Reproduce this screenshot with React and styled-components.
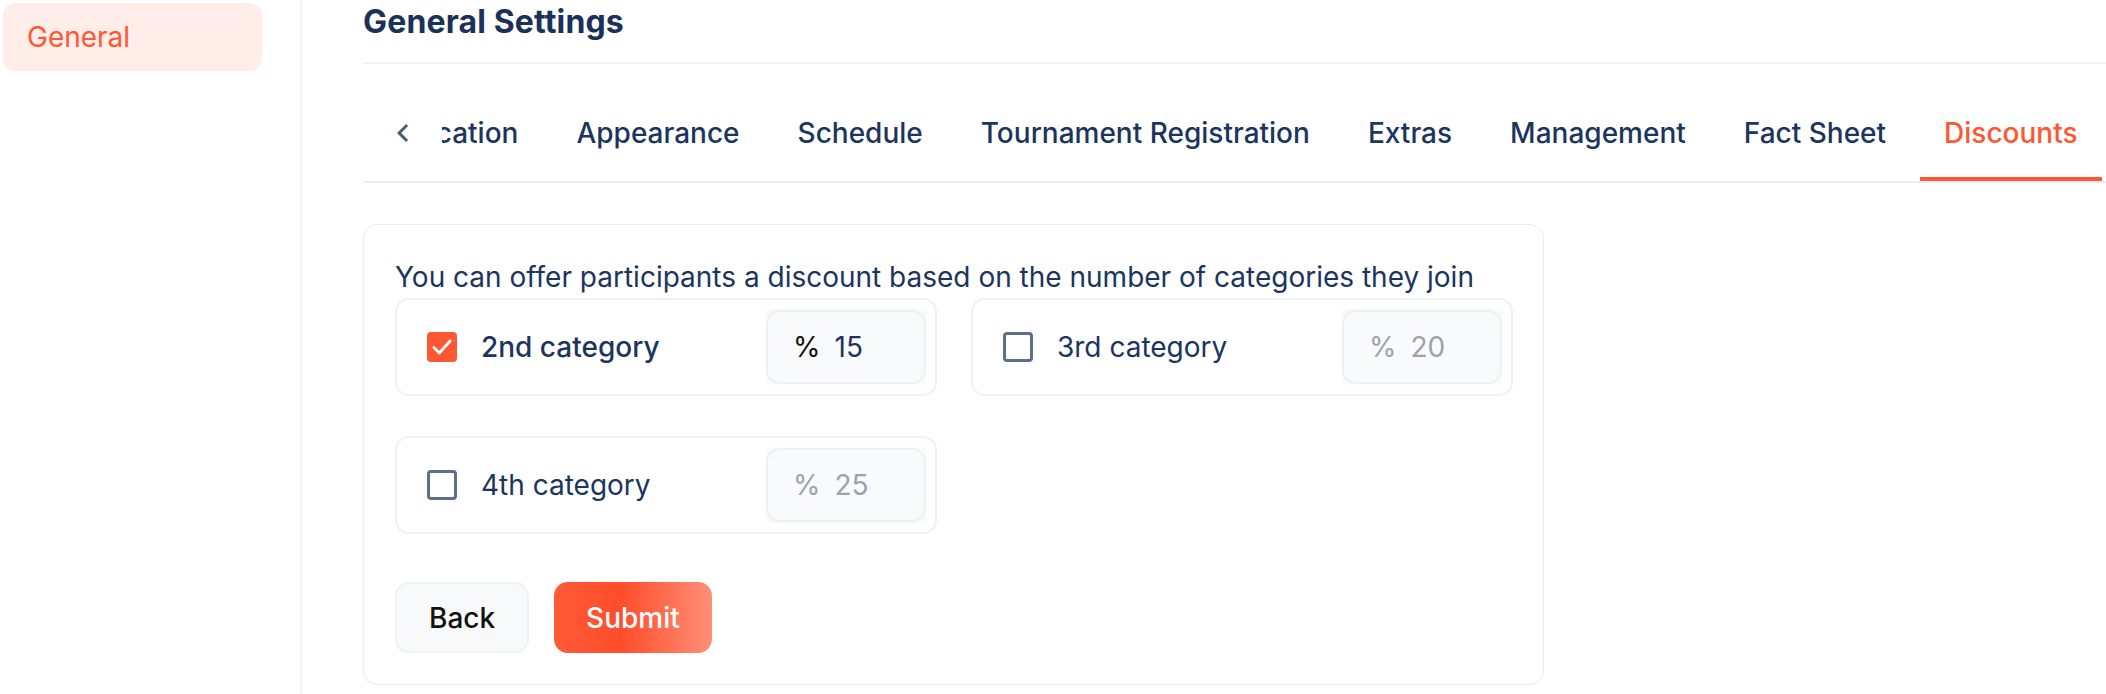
import React, { useLayoutEffect, useRef } from "react";
import styled, { createGlobalStyle, css } from "styled-components";

const GlobalStyle = createGlobalStyle`
  * { box-sizing: border-box; }
  body {
    margin: 0;
    background: #ffffff;
    font-family: Inter, "Noto Sans", "Liberation Sans", sans-serif;
  }
`;

const NAVY = "#1c355e";
const ORANGE = "#ff5733";

const Page = styled.div`
  display: flex;
  height: 694px;
  overflow: hidden;
`;

const Sidebar = styled.aside`
  width: 302px;
  flex: none;
  padding: 3px 38px 0 3px;
  border-right: 2px solid #f0f2f5;
`;

const NavItem = styled.div`
  height: 68px;
  display: flex;
  align-items: center;
  padding: 0 24px;
  border-radius: 12px;
  background: #ffedea;
  color: ${ORANGE};
  font-size: 28px;
  font-weight: 400;
`;

const Main = styled.main`
  flex: 1;
  min-width: 0;
  padding: 2px 0 0 61px;
`;

const Title = styled.h1`
  margin: 0;
  font-size: 32px;
  line-height: 40px;
  font-weight: 700;
  letter-spacing: 0.15px;
  color: #1a3158;
  padding-bottom: 20px;
  border-bottom: 2px solid #eef2f6;
`;

const TabBar = styled.div`
  margin-top: 20px;
  display: flex;
  border-bottom: 2px solid #efefef;
  padding-right: 4px;
`;

const ScrollButton = styled.button`
  width: 79px;
  flex: none;
  display: flex;
  align-items: center;
  justify-content: center;
  background: none;
  border: none;
  padding: 0;
  cursor: pointer;
`;

const Scroller = styled.div`
  flex: 1;
  min-width: 0;
  overflow: hidden;
  display: flex;
`;

const TabList = styled.div`
  display: flex;
  gap: 10px;
`;

const Tab = styled.div`
  position: relative;
  height: 97px;
  padding: 0 24px;
  display: flex;
  align-items: center;
  white-space: nowrap;
  font-size: 28px;
  font-weight: 500;
  color: ${(p) => (p.$active ? ORANGE : NAVY)};
  ${(p) =>
    p.$active &&
    css`
      &::after {
        content: "";
        position: absolute;
        left: 0;
        right: 0;
        bottom: 0;
        height: 4px;
        background: ${ORANGE};
      }
    `}
`;

const Card = styled.section`
  margin-top: 41px;
  width: 1181px;
  border: 1px solid #e9edf2;
  border-radius: 14px;
  padding: 31px;
`;

const Description = styled.p`
  margin: 0;
  font-size: 28px;
  line-height: 42px;
  color: ${NAVY};
`;

const Grid = styled.div`
  display: grid;
  grid-template-columns: 542px 542px;
  column-gap: 34px;
  row-gap: 40px;
`;

const OptionBox = styled.label`
  height: 98px;
  display: flex;
  align-items: center;
  padding: 0 9px 0 30px;
  border: 2px solid #eef1f5;
  border-radius: 14px;
`;

const CheckBox = styled.span`
  width: 30px;
  height: 30px;
  flex: none;
  display: flex;
  align-items: center;
  justify-content: center;
  border-radius: 4px;
  ${(p) =>
    p.$checked
      ? css`
          background: ${ORANGE};
        `
      : css`
          border: 3px solid #5f6e89;
          background: #fff;
        `}
`;

const Label = styled.span`
  flex: 1;
  margin-left: 24px;
  font-size: 28px;
  font-weight: ${(p) => (p.$checked ? 500 : 400)};
  color: ${NAVY};
`;

const InputWrap = styled.div`
  width: 160px;
  height: 76px;
  flex: none;
  display: flex;
  align-items: center;
  background: #fafafa;
`;

const InputShell = styled.div`
  width: 100%;
  height: 74px;
  display: flex;
  align-items: center;
  padding-left: 25px;
  background: #f9fafb;
  border: 2px solid #edf0f4;
  border-radius: 14px;
  font-size: 28px;
`;

const Prefix = styled.span`
  color: ${(p) => (p.$active ? "#111111" : "#9ca3af")};
`;

const ValueInput = styled.input`
  width: 60px;
  margin-left: 14px;
  padding: 0;
  border: none;
  outline: none;
  background: transparent;
  font: inherit;
  color: ${(p) => (p.$active ? NAVY : "#9ca3af")};
  -webkit-text-fill-color: ${(p) => (p.$active ? NAVY : "#9ca3af")};
  opacity: 1;
`;

const Actions = styled.div`
  margin-top: 48px;
  display: flex;
  gap: 25px;
`;

const Button = styled.button`
  height: 71px;
  border-radius: 14px;
  font-family: inherit;
  font-size: 28px;
  font-weight: 500;
  cursor: pointer;
  ${(p) =>
    p.$primary
      ? css`
          padding: 0 32px;
          border: none;
          color: #ffffff;
          background: linear-gradient(90deg, #ff5a37 0%, #ff4d2a 42%, #ff8f78 100%);
        `
      : css`
          padding: 0 32px;
          border: 2px solid #eef1f5;
          color: #111111;
          background: #f8f9fa;
        `}
`;

const ChevronLeft = () => (
  <svg width="36" height="36" viewBox="0 0 24 24" aria-hidden="true">
    <path d="M15.41 16.59 10.83 12l4.58-4.59L14 6l-6 6 6 6z" fill="#4a5c7d" />
  </svg>
);

const CheckMark = () => (
  <svg width="26" height="26" viewBox="0 0 24 24" aria-hidden="true">
    <path d="M4.5 12.5l5 5L19.5 6.5" fill="none" stroke="#fff" strokeWidth="2.6" strokeLinecap="round" strokeLinejoin="round" />
  </svg>
);

const tabs = [
  "Location",
  "Appearance",
  "Schedule",
  "Tournament Registration",
  "Extras",
  "Management",
  "Fact Sheet",
  "Discounts",
];

const options = [
  { label: "2nd category", value: "15", checked: true },
  { label: "3rd category", value: "20", checked: false },
  { label: "4th category", value: "25", checked: false },
];

function Option({ label, value, checked }) {
  return (
    <OptionBox>
      <CheckBox $checked={checked}>{checked && <CheckMark />}</CheckBox>
      <Label $checked={checked}>{label}</Label>
      <InputWrap>
        <InputShell>
          <Prefix $active={checked}>%</Prefix>
          <ValueInput $active={checked} value={value} readOnly disabled={!checked} />
        </InputShell>
      </InputWrap>
    </OptionBox>
  );
}

export default function App() {
  const scrollerRef = useRef(null);
  useLayoutEffect(() => {
    const el = scrollerRef.current;
    if (el) el.scrollLeft = el.scrollWidth;
  }, []);

  return (
    <>
      <GlobalStyle />
      <Page>
        <Sidebar>
          <NavItem>General</NavItem>
        </Sidebar>
        <Main>
          <Title>General Settings</Title>
          <TabBar>
            <ScrollButton aria-label="Scroll left">
              <ChevronLeft />
            </ScrollButton>
            <Scroller ref={scrollerRef}>
              <TabList>
                {tabs.map((t) => (
                  <Tab key={t} $active={t === "Discounts"}>
                    {t}
                  </Tab>
                ))}
              </TabList>
            </Scroller>
          </TabBar>
          <Card>
            <Description>
              You can offer participants a discount based on the number of categories they join
            </Description>
            <Grid>
              {options.map((o) => (
                <Option key={o.label} {...o} />
              ))}
            </Grid>
            <Actions>
              <Button>Back</Button>
              <Button $primary>Submit</Button>
            </Actions>
          </Card>
        </Main>
      </Page>
    </>
  );
}
